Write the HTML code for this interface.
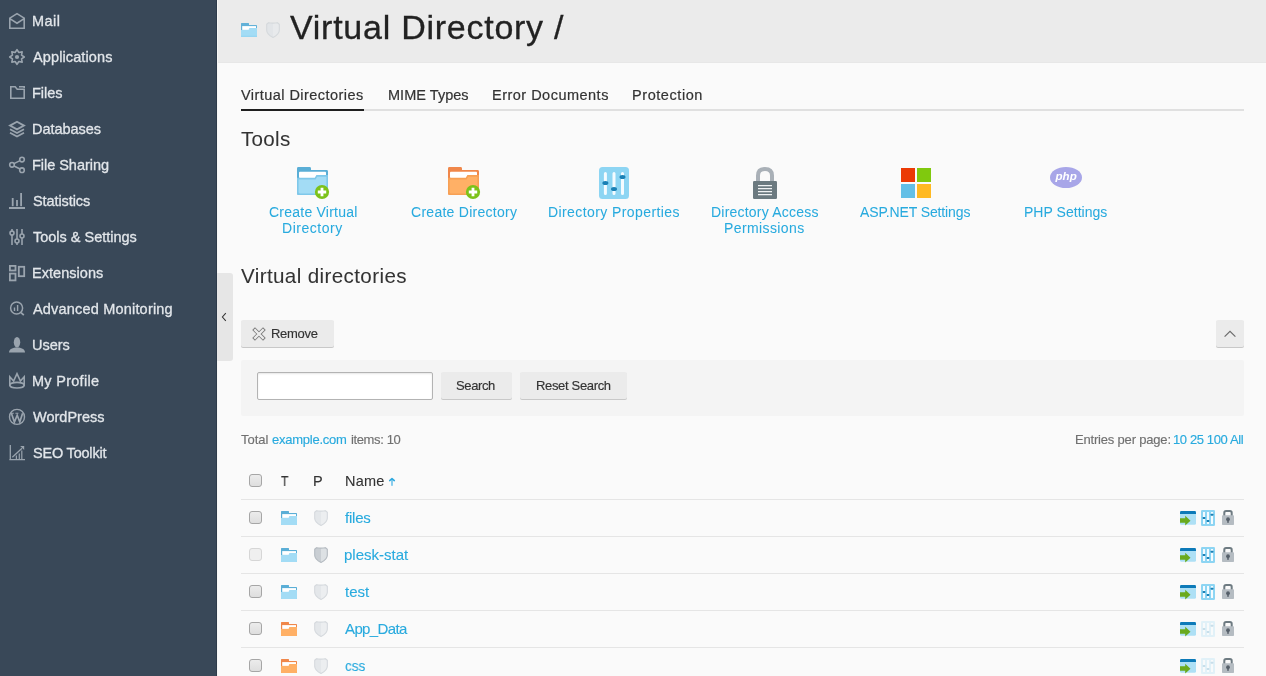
<!DOCTYPE html>
<html><head><meta charset="utf-8">
<style>
*{box-sizing:border-box}
html,body{margin:0;padding:0;width:1266px;height:676px;overflow:hidden;background:#fafafa;font-family:"Liberation Sans",sans-serif}
.t{position:absolute;white-space:nowrap;line-height:1;font-family:"Liberation Sans",sans-serif;will-change:transform;-webkit-text-stroke:0.3px currentColor}
.a{position:absolute}
svg{position:absolute;overflow:visible}
</style></head><body>
<!-- sidebar -->
<div class="a" style="left:0;top:0;width:216px;height:676px;background:#394858"></div>
<div class="a" style="left:216px;top:0;width:1px;height:676px;background:#2e3b4b"></div>
<div class="a" style="left:217px;top:0;width:1px;height:676px;background:#f6f6f4"></div>
<!-- header -->
<div class="a" style="left:218px;top:0;width:1048px;height:63px;background:#ebebeb;border-bottom:1px solid #e7e7e7"></div>
<!-- collapse handle -->
<div class="a" style="left:217px;top:273px;width:16px;height:88px;background:#e6e6e6;border-radius:0 3px 3px 0"></div>
<svg style="left:0;top:0" width="1266" height="676">
<!-- sidebar icons -->
<g fill="none" stroke="#9aa4ae" stroke-width="1.6">
 <!-- mail -->
 <path d="M9.8 28.2V18.2L17 13.6L24.2 18.2V28.2Z M9.8 18.6L17 23.2L24.2 18.6"/>
 <!-- gear -->
 <g transform="translate(17 57)"><path stroke-linejoin="round" d="M0.00 -7.30L1.88 -4.53L5.16 -5.16L4.53 -1.88L7.30 0.00L4.53 1.88L5.16 5.16L1.88 4.53L0.00 7.30L-1.88 4.53L-5.16 5.16L-4.53 1.88L-7.30 0.00L-4.53 -1.88L-5.16 -5.16L-1.88 -4.53Z"/><circle r="2.1" fill="#9aa4ae" stroke="none"/></g>
 <!-- files -->
 <path d="M10.8 86.8V98.2H24.2V89.2H17.2L15.2 86.8Z M19 86.8H24.2V88"/>
 <!-- databases -->
 <path d="M17 121.8L24 125.6L17 129.4L10 125.6Z" stroke-width="1.8"/>
 <path d="M10 129.2L17 133L24 129.2 M10 132.8L17 136.6L24 132.8" stroke-width="1.8"/>
 <!-- share -->
 <circle cx="22" cy="159.6" r="2.3"/><circle cx="12" cy="164.8" r="2.3"/><circle cx="22" cy="170.2" r="2.3"/>
 <path d="M14 163.6L20 160.6 M14 166L20 169"/>
</g>
<g fill="#9aa4ae">
 <!-- statistics -->
 <rect x="11.8" y="198" width="1.8" height="8.2"/><rect x="16.1" y="200" width="1.8" height="6.2"/><rect x="20.2" y="193" width="1.8" height="13.2"/><rect x="9" y="207" width="16" height="2"/>
</g>
<g fill="none" stroke="#9aa4ae" stroke-width="1.6">
 <!-- tools & settings -->
 <path d="M12 229V231.2 M12 235V245 M17 229V239 M17 243V245 M22 229V234 M22 238V245"/>
 <circle cx="12" cy="233.1" r="2"/><circle cx="17" cy="241" r="2"/><circle cx="22" cy="236" r="2"/>
 <!-- extensions -->
 <rect x="9.9" y="265.9" width="5.6" height="4.6" stroke-width="1.8"/><rect x="9.9" y="273.6" width="5.6" height="6.8" stroke-width="1.8"/><rect x="18.8" y="266.8" width="5.4" height="9.4" stroke-width="1.8"/>
 <!-- adv monitoring -->
 <circle cx="16.6" cy="308" r="6" stroke-width="1.5"/><path d="M21 312.6L23.8 315.2" stroke-width="1.8"/>
 <path d="M14.5 307.5V311 M17.6 305V311" stroke-width="1.4"/>
</g>
<g fill="#9aa4ae">
 <!-- users -->
 <ellipse cx="17" cy="342.2" rx="3.2" ry="5.2"/>
 <path d="M9 352.6C9 349 13 347.6 17 347.6C21 347.6 25 349 25 352.6Z"/>
</g>
<g fill="none" stroke="#9aa4ae" stroke-width="1.4">
 <!-- crown -->
 <path d="M9.8 386V376.8L13.6 381L17 373.6L20.4 381L24.2 376.8V386" stroke-width="1.6"/>
 <ellipse cx="17" cy="385.2" rx="7.2" ry="2.8" stroke-width="1.6"/>
 <!-- wordpress -->
 <circle cx="17" cy="416.9" r="7.5" stroke-width="1.4"/>
 <path d="M11.4 413.2L14.4 422L17.2 415.2L19.8 422L22.6 413.2" stroke-width="1.7"/><path d="M10.6 413.2H13.8 M15.4 413.2H18.4" stroke-width="1.1"/>
 <!-- seo -->
 <path d="M10.3 445V460.2 M9.3 459.6H25" stroke-width="1.3"/>
 <path d="M12.3 457.3L22 448.3" stroke-width="1.3"/>
 <path d="M20.2 445.9L24.2 445.9L24.2 449.9Z" fill="#9aa4ae" stroke="none"/>
 <path d="M16.4 455.6V459 M19.3 453.5V459 M21.8 450.6V459" stroke-width="1.2"/>
</g>
</svg>
<!-- title icons -->
<svg style="left:241px;top:23px" width="16" height="14" viewBox="0 0 16 14">
 <path d="M0 0.6Q0 0 0.6 0H7.4Q8 0 8 0.6V2H15.2Q16 2 16 2.8V14H0Z" fill="#62b1d8"/>
 <rect x="1.2" y="3.1" width="13.8" height="3.8" fill="#fff"/>
 <path d="M0 6.9H7.6L8.4 5.1H16V13.4Q16 14 15.4 14H0.6Q0 14 0 13.4Z" fill="#a3dcf5"/>
 <rect x="0" y="12.6" width="16" height="1.4" fill="#97d6f2"/>
</svg>
<svg style="left:266px;top:22px" width="14" height="16" viewBox="0 0 14 16">
 <path d="M0.7 2.2L2.6 0.7Q7 1.5 11.4 0.7L13.3 2.2V8.2Q13.3 12.4 7 15.4Q0.7 12.4 0.7 8.2Z" fill="#e2e5e8"/>
 <path d="M7 1.1Q9.2 1.1 11.4 0.7L13.3 2.2V8.2Q13.3 12.4 7 15.4Z" fill="#e8eaec"/>
 <path d="M0.7 2.2L2.6 0.7Q7 1.5 11.4 0.7L13.3 2.2V8.2Q13.3 12.4 7 15.4Q0.7 12.4 0.7 8.2Z" fill="none" stroke="#d5d9dc" stroke-width="1.1"/>
</svg>
<!-- tab line -->
<div class="a" style="left:241px;top:109px;width:1003px;height:2px;background:#e0e0e0"></div>
<div class="a" style="left:241px;top:109px;width:123px;height:2px;background:#1f1f1f"></div>

<!-- tool icons -->
<svg style="left:297px;top:167px" width="32" height="32" viewBox="0 0 32 32">
 <path d="M0 1.4Q0 0 1.4 0H12.6Q14 0 14 1.4V3H29.6Q31 3 31 4.4V26.6Q31 28 29.6 28H1.4Q0 28 0 26.6Z" fill="#5aaed6"/>
 <rect x="2" y="4.8" width="27" height="6.2" rx="0.8" fill="#fff"/>
 <path d="M0 10.8H17.8L19.4 8.1H31V26.6Q31 28 29.6 28H1.4Q0 28 0 26.6Z" fill="#7fc8ea"/>
 <path d="M1.6 12.4H18.6L20.2 9.7H29.4V25Q29.4 26.4 28 26.4H3Q1.6 26.4 1.6 25Z" fill="#a3dcf5"/>
 <circle cx="25" cy="25" r="7.1" fill="#7cc21a"/>
 <path d="M25 20.8V29.2 M20.8 25H29.2" stroke="#fff" stroke-width="2.8"/>
</svg>
<svg style="left:447.75px;top:167px" width="32" height="32" viewBox="0 0 32 32">
 <path d="M0 1.4Q0 0 1.4 0H12.6Q14 0 14 1.4V3H29.6Q31 3 31 4.4V26.6Q31 28 29.6 28H1.4Q0 28 0 26.6Z" fill="#f0874a"/>
 <rect x="2" y="4.8" width="27" height="6.2" rx="0.8" fill="#fff"/>
 <path d="M0 10.8H17.8L19.4 8.1H31V26.6Q31 28 29.6 28H1.4Q0 28 0 26.6Z" fill="#f7a055"/>
 <path d="M1.6 12.4H18.6L20.2 9.7H29.4V25Q29.4 26.4 28 26.4H3Q1.6 26.4 1.6 25Z" fill="#ffb066"/>
 <circle cx="25" cy="25" r="7.1" fill="#7cc21a"/>
 <path d="M25 20.8V29.2 M20.8 25H29.2" stroke="#fff" stroke-width="2.8"/>
</svg>
<svg style="left:599px;top:167px" width="30" height="32" viewBox="0 0 30 32">
 <rect x="0" y="0" width="30" height="32" rx="3.5" fill="#8dd5f3"/>
 <g stroke="#f4fbff" stroke-width="3" stroke-linecap="round"><path d="M6.4 6.4V26.6 M15 6.4V26.6 M23.5 6.4V26.6"/></g>
 <g fill="#1a80b5"><ellipse cx="6.4" cy="16" rx="3" ry="2"/><ellipse cx="15" cy="22" rx="3" ry="2"/><ellipse cx="23.5" cy="10" rx="3" ry="2"/></g>
</svg>
<svg style="left:753px;top:167px" width="24" height="32" viewBox="0 0 24 32">
 <path d="M5 14V8.6Q5 2 12 2Q19 2 19 8.6V14" fill="none" stroke="#a9b0b7" stroke-width="4"/>
 <rect x="0" y="14" width="24" height="18" rx="1.2" fill="#6c7a80"/>
 <g stroke="#f0f2f3" stroke-width="1.1"><path d="M5 18.6H19 M5 21.6H19 M5 24.6H19 M5 27.6H19"/></g>
</svg>
<svg style="left:901px;top:168px" width="30" height="30" viewBox="0 0 30 30">
 <rect x="0" y="0" width="14" height="14" fill="#eb3a05"/><rect x="16" y="0" width="14" height="14" fill="#80c90e"/>
 <rect x="0" y="16" width="14" height="14" fill="#63bfe6"/><rect x="16" y="16" width="14" height="14" fill="#ffb922"/>
</svg>
<svg style="left:1050px;top:167px;will-change:transform" width="32" height="21" viewBox="0 0 32 21">
 <ellipse cx="16" cy="10.5" rx="16" ry="10.5" fill="#a8a6e8"/>
 <text x="16.2" y="13.4" text-anchor="middle" font-family="Liberation Sans" font-weight="bold" font-style="italic" font-size="11.6" fill="#fff" letter-spacing="0.1" transform="translate(0 0)">php</text>
</svg>

<!-- remove button -->
<div class="a" style="left:241px;top:320px;width:93px;height:27px;background:#ebebeb;border-radius:2px;box-shadow:0 1px 0 #c8c8c8"></div>
<svg style="left:252px;top:327px" width="14" height="14" viewBox="0 0 14 14">
 <path d="M1.6 1.6L12.4 12.4 M12.4 1.6L1.6 12.4" stroke="#7a7a7a" stroke-width="3.9"/>
 <path d="M2.3 2.3L11.7 11.7 M11.7 2.3L2.3 11.7" stroke="#ececec" stroke-width="2.3"/>
</svg>
<!-- collapse up button -->
<div class="a" style="left:1216px;top:320px;width:28px;height:27px;background:#ebebeb;border-radius:2px;box-shadow:0 1px 0 #c8c8c8"></div>
<svg style="left:1216px;top:320px" width="28" height="28"><path d="M8.6 16.6L14 11.4L19.4 16.6" fill="none" stroke="#6b6b6b" stroke-width="1.2"/></svg>
<!-- chevron left in handle -->
<svg style="left:217px;top:273px" width="16" height="87"><path d="M8.8 40.2L5.4 44L8.8 47.8" fill="none" stroke="#333" stroke-width="1.05"/></svg>

<!-- search panel -->
<div class="a" style="left:241px;top:360px;width:1003px;height:56px;background:#f4f4f4;border-radius:2px"></div>
<div class="a" style="left:257px;top:372px;width:176px;height:28px;background:#fff;border:1px solid #b3b3b3;border-radius:2px;box-shadow:inset 0 1px 2px rgba(0,0,0,.1)"></div>
<div class="a" style="left:441px;top:372px;width:71px;height:27px;background:#ebebeb;border-radius:2px;box-shadow:0 1px 0 #c8c8c8"></div>
<div class="a" style="left:520px;top:372px;width:107px;height:27px;background:#ebebeb;border-radius:2px;box-shadow:0 1px 0 #c8c8c8"></div>

<!-- table -->
<div class="a" style="left:249px;top:474px;width:13px;height:13px;background:linear-gradient(#ececec,#dedede);border:1px solid #a6a6a6;border-radius:3px"></div>
<svg style="left:384px;top:474px" width="16" height="16" viewBox="0 0 16 16">
 <rect x="7.1" y="6" width="1.8" height="5.8" fill="#7cc8ec"/>
 <path d="M5.7 6.6L8 4.6L10.3 6.6" fill="none" stroke="#30a9df" stroke-width="1.6" stroke-linecap="round" stroke-linejoin="round"/>
</svg>
<div class="a" style="left:241px;top:499px;width:1003px;height:1px;background:#e5e5e5"></div>
<div class="a" style="left:241px;top:536px;width:1003px;height:1px;background:#e5e5e5"></div>
<div class="a" style="left:241px;top:573px;width:1003px;height:1px;background:#e5e5e5"></div>
<div class="a" style="left:241px;top:610px;width:1003px;height:1px;background:#e5e5e5"></div>
<div class="a" style="left:241px;top:647px;width:1003px;height:1px;background:#e5e5e5"></div>
<div class="a" style="left:249px;top:511px;width:13px;height:13px;background:linear-gradient(#ececec,#dedede);border:1px solid #a6a6a6;border-radius:3px"></div>
<svg style="left:281px;top:511px" width="16" height="14" viewBox="0 0 16 14">
 <path d="M0 0.6Q0 0 0.6 0H7.4Q8 0 8 0.6V2H15.2Q16 2 16 2.8V14H0Z" fill="#5aaed6"/>
 <rect x="1.2" y="3.1" width="13.8" height="3.8" fill="#fff"/>
 <path d="M0 6.9H7.6L8.4 5.1H16V13.4Q16 14 15.4 14H0.6Q0 14 0 13.4Z" fill="#a3dcf5"/>
</svg>
<svg style="left:314px;top:510px" width="14" height="16" viewBox="0 0 14 16">
 <path d="M0.7 2.2L2.6 0.7Q7 1.5 11.4 0.7L13.3 2.2V8.2Q13.3 12.4 7 15.4Q0.7 12.4 0.7 8.2Z" fill="#e4e7ea"/>
 <path d="M7 1.1Q9.2 1.1 11.4 0.7L13.3 2.2V8.2Q13.3 12.4 7 15.4Z" fill="#eceef0"/>
 <path d="M0.7 2.2L2.6 0.7Q7 1.5 11.4 0.7L13.3 2.2V8.2Q13.3 12.4 7 15.4Q0.7 12.4 0.7 8.2Z" fill="none" stroke="#d5d9dd" stroke-width="1.1"/>
</svg>
<svg style="left:1180px;top:511px" width="16" height="15" viewBox="0 0 16 15">
 <rect x="0" y="0" width="16" height="13.8" rx="1.4" fill="#aee0f5"/>
 <path d="M1.4 0H14.6Q16 0 16 1.4V3H0V1.4Q0 0 1.4 0Z" fill="#0d7ab8"/>
 <path d="M0 7.3H5.2V4.8L10.5 9.7L5.2 14.6V11.8H0Z" fill="#6aaa1e"/>
</svg>
<svg style="left:1201px;top:510px" width="14" height="16" viewBox="0 0 14 16" opacity="1">
 <rect x="0" y="0" width="14" height="16" rx="1.2" fill="#8dd5f3"/>
 <g stroke="#f4fbff" stroke-width="2"><path d="M3 2V14 M7 2V14 M11 2V14"/></g>
 <g fill="#1a80b5"><rect x="1.7" y="7" width="2.6" height="2" rx=".5"/><rect x="5.7" y="10" width="2.6" height="2" rx=".5"/><rect x="9.7" y="3.8" width="2.6" height="2" rx=".5"/></g>
</svg>
<svg style="left:1222px;top:510px" width="12" height="16" viewBox="0 0 12 16">
 <path d="M2.3 6V2.8Q2.3 1 4.1 1H7.9Q9.7 1 9.7 2.8V6" fill="none" stroke="#6e7b82" stroke-width="2"/>
 <rect x="0" y="5.2" width="12" height="9.8" rx="0.8" fill="#b5bcc2"/>
 <circle cx="6" cy="9.2" r="1.9" fill="#56606a"/><rect x="5.2" y="9.2" width="1.6" height="3.6" fill="#56606a"/>
</svg>
<div class="a" style="left:249px;top:548px;width:13px;height:13px;background:#efefef;border:1px solid #d6d6d6;border-radius:3px"></div>
<svg style="left:281px;top:548px" width="16" height="14" viewBox="0 0 16 14">
 <path d="M0 0.6Q0 0 0.6 0H7.4Q8 0 8 0.6V2H15.2Q16 2 16 2.8V14H0Z" fill="#5aaed6"/>
 <rect x="1.2" y="3.1" width="13.8" height="3.8" fill="#fff"/>
 <path d="M0 6.9H7.6L8.4 5.1H16V13.4Q16 14 15.4 14H0.6Q0 14 0 13.4Z" fill="#a3dcf5"/>
</svg>
<svg style="left:314px;top:547px" width="14" height="16" viewBox="0 0 14 16">
 <path d="M0.7 2.2L2.6 0.7Q7 1.5 11.4 0.7L13.3 2.2V8.2Q13.3 12.4 7 15.4Q0.7 12.4 0.7 8.2Z" fill="#c9ced3"/>
 <path d="M7 1.1Q9.2 1.1 11.4 0.7L13.3 2.2V8.2Q13.3 12.4 7 15.4Z" fill="#dde1e4"/>
 <path d="M0.7 2.2L2.6 0.7Q7 1.5 11.4 0.7L13.3 2.2V8.2Q13.3 12.4 7 15.4Q0.7 12.4 0.7 8.2Z" fill="none" stroke="#b5bbc1" stroke-width="1.1"/>
</svg>
<svg style="left:1180px;top:548px" width="16" height="15" viewBox="0 0 16 15">
 <rect x="0" y="0" width="16" height="13.8" rx="1.4" fill="#aee0f5"/>
 <path d="M1.4 0H14.6Q16 0 16 1.4V3H0V1.4Q0 0 1.4 0Z" fill="#0d7ab8"/>
 <path d="M0 7.3H5.2V4.8L10.5 9.7L5.2 14.6V11.8H0Z" fill="#6aaa1e"/>
</svg>
<svg style="left:1201px;top:547px" width="14" height="16" viewBox="0 0 14 16" opacity="1">
 <rect x="0" y="0" width="14" height="16" rx="1.2" fill="#8dd5f3"/>
 <g stroke="#f4fbff" stroke-width="2"><path d="M3 2V14 M7 2V14 M11 2V14"/></g>
 <g fill="#1a80b5"><rect x="1.7" y="7" width="2.6" height="2" rx=".5"/><rect x="5.7" y="10" width="2.6" height="2" rx=".5"/><rect x="9.7" y="3.8" width="2.6" height="2" rx=".5"/></g>
</svg>
<svg style="left:1222px;top:547px" width="12" height="16" viewBox="0 0 12 16">
 <path d="M2.3 6V2.8Q2.3 1 4.1 1H7.9Q9.7 1 9.7 2.8V6" fill="none" stroke="#6e7b82" stroke-width="2"/>
 <rect x="0" y="5.2" width="12" height="9.8" rx="0.8" fill="#b5bcc2"/>
 <circle cx="6" cy="9.2" r="1.9" fill="#56606a"/><rect x="5.2" y="9.2" width="1.6" height="3.6" fill="#56606a"/>
</svg>
<div class="a" style="left:249px;top:585px;width:13px;height:13px;background:linear-gradient(#ececec,#dedede);border:1px solid #a6a6a6;border-radius:3px"></div>
<svg style="left:281px;top:585px" width="16" height="14" viewBox="0 0 16 14">
 <path d="M0 0.6Q0 0 0.6 0H7.4Q8 0 8 0.6V2H15.2Q16 2 16 2.8V14H0Z" fill="#5aaed6"/>
 <rect x="1.2" y="3.1" width="13.8" height="3.8" fill="#fff"/>
 <path d="M0 6.9H7.6L8.4 5.1H16V13.4Q16 14 15.4 14H0.6Q0 14 0 13.4Z" fill="#a3dcf5"/>
</svg>
<svg style="left:314px;top:584px" width="14" height="16" viewBox="0 0 14 16">
 <path d="M0.7 2.2L2.6 0.7Q7 1.5 11.4 0.7L13.3 2.2V8.2Q13.3 12.4 7 15.4Q0.7 12.4 0.7 8.2Z" fill="#e4e7ea"/>
 <path d="M7 1.1Q9.2 1.1 11.4 0.7L13.3 2.2V8.2Q13.3 12.4 7 15.4Z" fill="#eceef0"/>
 <path d="M0.7 2.2L2.6 0.7Q7 1.5 11.4 0.7L13.3 2.2V8.2Q13.3 12.4 7 15.4Q0.7 12.4 0.7 8.2Z" fill="none" stroke="#d5d9dd" stroke-width="1.1"/>
</svg>
<svg style="left:1180px;top:585px" width="16" height="15" viewBox="0 0 16 15">
 <rect x="0" y="0" width="16" height="13.8" rx="1.4" fill="#aee0f5"/>
 <path d="M1.4 0H14.6Q16 0 16 1.4V3H0V1.4Q0 0 1.4 0Z" fill="#0d7ab8"/>
 <path d="M0 7.3H5.2V4.8L10.5 9.7L5.2 14.6V11.8H0Z" fill="#6aaa1e"/>
</svg>
<svg style="left:1201px;top:584px" width="14" height="16" viewBox="0 0 14 16" opacity="1">
 <rect x="0" y="0" width="14" height="16" rx="1.2" fill="#8dd5f3"/>
 <g stroke="#f4fbff" stroke-width="2"><path d="M3 2V14 M7 2V14 M11 2V14"/></g>
 <g fill="#1a80b5"><rect x="1.7" y="7" width="2.6" height="2" rx=".5"/><rect x="5.7" y="10" width="2.6" height="2" rx=".5"/><rect x="9.7" y="3.8" width="2.6" height="2" rx=".5"/></g>
</svg>
<svg style="left:1222px;top:584px" width="12" height="16" viewBox="0 0 12 16">
 <path d="M2.3 6V2.8Q2.3 1 4.1 1H7.9Q9.7 1 9.7 2.8V6" fill="none" stroke="#6e7b82" stroke-width="2"/>
 <rect x="0" y="5.2" width="12" height="9.8" rx="0.8" fill="#b5bcc2"/>
 <circle cx="6" cy="9.2" r="1.9" fill="#56606a"/><rect x="5.2" y="9.2" width="1.6" height="3.6" fill="#56606a"/>
</svg>
<div class="a" style="left:249px;top:622px;width:13px;height:13px;background:linear-gradient(#ececec,#dedede);border:1px solid #a6a6a6;border-radius:3px"></div>
<svg style="left:281px;top:622px" width="16" height="14" viewBox="0 0 16 14">
 <path d="M0 0.6Q0 0 0.6 0H7.4Q8 0 8 0.6V2H15.2Q16 2 16 2.8V14H0Z" fill="#f0874a"/>
 <rect x="1.2" y="3.1" width="13.8" height="3.8" fill="#fff"/>
 <path d="M0 6.9H7.6L8.4 5.1H16V13.4Q16 14 15.4 14H0.6Q0 14 0 13.4Z" fill="#ffb066"/>
</svg>
<svg style="left:314px;top:621px" width="14" height="16" viewBox="0 0 14 16">
 <path d="M0.7 2.2L2.6 0.7Q7 1.5 11.4 0.7L13.3 2.2V8.2Q13.3 12.4 7 15.4Q0.7 12.4 0.7 8.2Z" fill="#e4e7ea"/>
 <path d="M7 1.1Q9.2 1.1 11.4 0.7L13.3 2.2V8.2Q13.3 12.4 7 15.4Z" fill="#eceef0"/>
 <path d="M0.7 2.2L2.6 0.7Q7 1.5 11.4 0.7L13.3 2.2V8.2Q13.3 12.4 7 15.4Q0.7 12.4 0.7 8.2Z" fill="none" stroke="#d5d9dd" stroke-width="1.1"/>
</svg>
<svg style="left:1180px;top:622px" width="16" height="15" viewBox="0 0 16 15">
 <rect x="0" y="0" width="16" height="13.8" rx="1.4" fill="#aee0f5"/>
 <path d="M1.4 0H14.6Q16 0 16 1.4V3H0V1.4Q0 0 1.4 0Z" fill="#0d7ab8"/>
 <path d="M0 7.3H5.2V4.8L10.5 9.7L5.2 14.6V11.8H0Z" fill="#6aaa1e"/>
</svg>
<svg style="left:1201px;top:621px" width="14" height="16" viewBox="0 0 14 16" opacity="0.22">
 <rect x="0" y="0" width="14" height="16" rx="1.2" fill="#8dd5f3"/>
 <g stroke="#f4fbff" stroke-width="2"><path d="M3 2V14 M7 2V14 M11 2V14"/></g>
 <g fill="#1a80b5"><rect x="1.7" y="7" width="2.6" height="2" rx=".5"/><rect x="5.7" y="10" width="2.6" height="2" rx=".5"/><rect x="9.7" y="3.8" width="2.6" height="2" rx=".5"/></g>
</svg>
<svg style="left:1222px;top:621px" width="12" height="16" viewBox="0 0 12 16">
 <path d="M2.3 6V2.8Q2.3 1 4.1 1H7.9Q9.7 1 9.7 2.8V6" fill="none" stroke="#6e7b82" stroke-width="2"/>
 <rect x="0" y="5.2" width="12" height="9.8" rx="0.8" fill="#b5bcc2"/>
 <circle cx="6" cy="9.2" r="1.9" fill="#56606a"/><rect x="5.2" y="9.2" width="1.6" height="3.6" fill="#56606a"/>
</svg>
<div class="a" style="left:249px;top:659px;width:13px;height:13px;background:linear-gradient(#ececec,#dedede);border:1px solid #a6a6a6;border-radius:3px"></div>
<svg style="left:281px;top:659px" width="16" height="14" viewBox="0 0 16 14">
 <path d="M0 0.6Q0 0 0.6 0H7.4Q8 0 8 0.6V2H15.2Q16 2 16 2.8V14H0Z" fill="#f0874a"/>
 <rect x="1.2" y="3.1" width="13.8" height="3.8" fill="#fff"/>
 <path d="M0 6.9H7.6L8.4 5.1H16V13.4Q16 14 15.4 14H0.6Q0 14 0 13.4Z" fill="#ffb066"/>
</svg>
<svg style="left:314px;top:658px" width="14" height="16" viewBox="0 0 14 16">
 <path d="M0.7 2.2L2.6 0.7Q7 1.5 11.4 0.7L13.3 2.2V8.2Q13.3 12.4 7 15.4Q0.7 12.4 0.7 8.2Z" fill="#e4e7ea"/>
 <path d="M7 1.1Q9.2 1.1 11.4 0.7L13.3 2.2V8.2Q13.3 12.4 7 15.4Z" fill="#eceef0"/>
 <path d="M0.7 2.2L2.6 0.7Q7 1.5 11.4 0.7L13.3 2.2V8.2Q13.3 12.4 7 15.4Q0.7 12.4 0.7 8.2Z" fill="none" stroke="#d5d9dd" stroke-width="1.1"/>
</svg>
<svg style="left:1180px;top:659px" width="16" height="15" viewBox="0 0 16 15">
 <rect x="0" y="0" width="16" height="13.8" rx="1.4" fill="#aee0f5"/>
 <path d="M1.4 0H14.6Q16 0 16 1.4V3H0V1.4Q0 0 1.4 0Z" fill="#0d7ab8"/>
 <path d="M0 7.3H5.2V4.8L10.5 9.7L5.2 14.6V11.8H0Z" fill="#6aaa1e"/>
</svg>
<svg style="left:1201px;top:658px" width="14" height="16" viewBox="0 0 14 16" opacity="0.22">
 <rect x="0" y="0" width="14" height="16" rx="1.2" fill="#8dd5f3"/>
 <g stroke="#f4fbff" stroke-width="2"><path d="M3 2V14 M7 2V14 M11 2V14"/></g>
 <g fill="#1a80b5"><rect x="1.7" y="7" width="2.6" height="2" rx=".5"/><rect x="5.7" y="10" width="2.6" height="2" rx=".5"/><rect x="9.7" y="3.8" width="2.6" height="2" rx=".5"/></g>
</svg>
<svg style="left:1222px;top:658px" width="12" height="16" viewBox="0 0 12 16">
 <path d="M2.3 6V2.8Q2.3 1 4.1 1H7.9Q9.7 1 9.7 2.8V6" fill="none" stroke="#6e7b82" stroke-width="2"/>
 <rect x="0" y="5.2" width="12" height="9.8" rx="0.8" fill="#b5bcc2"/>
 <circle cx="6" cy="9.2" r="1.9" fill="#56606a"/><rect x="5.2" y="9.2" width="1.6" height="3.6" fill="#56606a"/>
</svg>
<div class="t" style="left:32.20px;top:14.00px;font-size:14.5px;color:#e2e6ea;letter-spacing:0.467px;-webkit-text-stroke:0.3px currentColor">Mail</div>
<div class="t" style="left:33.20px;top:50.00px;font-size:14.5px;color:#e2e6ea;letter-spacing:0.109px;-webkit-text-stroke:0.3px currentColor">Applications</div>
<div class="t" style="left:32.20px;top:86.00px;font-size:14.5px;color:#e2e6ea;letter-spacing:-0.050px;-webkit-text-stroke:0.3px currentColor">Files</div>
<div class="t" style="left:32.20px;top:122.00px;font-size:14.5px;color:#e2e6ea;letter-spacing:-0.025px;-webkit-text-stroke:0.3px currentColor">Databases</div>
<div class="t" style="left:32.20px;top:158.00px;font-size:14.5px;color:#e2e6ea;letter-spacing:-0.036px;-webkit-text-stroke:0.3px currentColor">File Sharing</div>
<div class="t" style="left:33.20px;top:194.00px;font-size:14.5px;color:#e2e6ea;letter-spacing:-0.089px;-webkit-text-stroke:0.3px currentColor">Statistics</div>
<div class="t" style="left:33.20px;top:230.00px;font-size:14.5px;color:#e2e6ea;letter-spacing:-0.013px;-webkit-text-stroke:0.3px currentColor">Tools &amp; Settings</div>
<div class="t" style="left:32.20px;top:266.00px;font-size:14.5px;color:#e2e6ea;letter-spacing:0.044px;-webkit-text-stroke:0.3px currentColor">Extensions</div>
<div class="t" style="left:33.20px;top:302.00px;font-size:14.5px;color:#e2e6ea;letter-spacing:0.189px;-webkit-text-stroke:0.3px currentColor">Advanced Monitoring</div>
<div class="t" style="left:32.20px;top:338.00px;font-size:14.5px;color:#e2e6ea;letter-spacing:0.000px;-webkit-text-stroke:0.3px currentColor">Users</div>
<div class="t" style="left:32.20px;top:374.00px;font-size:14.5px;color:#e2e6ea;letter-spacing:0.278px;-webkit-text-stroke:0.3px currentColor">My Profile</div>
<div class="t" style="left:33.20px;top:410.00px;font-size:14.5px;color:#e2e6ea;letter-spacing:0.000px;-webkit-text-stroke:0.3px currentColor">WordPress</div>
<div class="t" style="left:33.20px;top:446.00px;font-size:14.5px;color:#e2e6ea;letter-spacing:-0.200px;-webkit-text-stroke:0.3px currentColor">SEO Toolkit</div>
<div class="t" style="left:290.00px;top:10.00px;font-size:34px;color:#222222;letter-spacing:0.744px;-webkit-text-stroke:0.3px currentColor">Virtual Directory /</div>
<div class="t" style="left:241.10px;top:88.00px;font-size:14.5px;color:#333333;letter-spacing:0.444px;-webkit-text-stroke:0.2px currentColor">Virtual Directories</div>
<div class="t" style="left:387.60px;top:88.00px;font-size:14.5px;color:#333333;letter-spacing:0.033px;-webkit-text-stroke:0.2px currentColor">MIME Types</div>
<div class="t" style="left:491.90px;top:88.00px;font-size:14.5px;color:#333333;letter-spacing:0.486px;-webkit-text-stroke:0.2px currentColor">Error Documents</div>
<div class="t" style="left:631.70px;top:88.00px;font-size:14.5px;color:#333333;letter-spacing:0.567px;-webkit-text-stroke:0.2px currentColor">Protection</div>
<div class="t" style="left:241.10px;top:129.00px;font-size:20.6px;color:#333333;letter-spacing:0.300px;-webkit-text-stroke:0.05px currentColor">Tools</div>
<div class="t" style="left:269.00px;top:205.00px;font-size:14px;color:#28aade;letter-spacing:0.231px;-webkit-text-stroke:0.05px currentColor">Create Virtual</div>
<div class="t" style="left:282.40px;top:221.00px;font-size:14px;color:#28aade;letter-spacing:0.525px;-webkit-text-stroke:0.05px currentColor">Directory</div>
<div class="t" style="left:410.70px;top:205.00px;font-size:14px;color:#28aade;letter-spacing:0.273px;-webkit-text-stroke:0.05px currentColor">Create Directory</div>
<div class="t" style="left:547.80px;top:205.00px;font-size:14px;color:#28aade;letter-spacing:0.411px;-webkit-text-stroke:0.05px currentColor">Directory Properties</div>
<div class="t" style="left:710.60px;top:205.00px;font-size:14px;color:#28aade;letter-spacing:0.213px;-webkit-text-stroke:0.05px currentColor">Directory Access</div>
<div class="t" style="left:724.20px;top:221.00px;font-size:14px;color:#28aade;letter-spacing:0.400px;-webkit-text-stroke:0.05px currentColor">Permissions</div>
<div class="t" style="left:860.30px;top:205.00px;font-size:14px;color:#28aade;letter-spacing:-0.127px;-webkit-text-stroke:0.05px currentColor">ASP.NET Settings</div>
<div class="t" style="left:1024.10px;top:205.00px;font-size:14px;color:#28aade;letter-spacing:0.027px;-webkit-text-stroke:0.05px currentColor">PHP Settings</div>
<div class="t" style="left:241.00px;top:266.00px;font-size:20.6px;color:#333333;letter-spacing:0.378px;-webkit-text-stroke:0.05px currentColor">Virtual directories</div>
<div class="t" style="left:270.70px;top:327.00px;font-size:13px;color:#333333;letter-spacing:-0.280px;-webkit-text-stroke:0.15px currentColor">Remove</div>
<div class="t" style="left:456.40px;top:379.00px;font-size:13px;color:#333333;letter-spacing:-0.380px;-webkit-text-stroke:0.15px currentColor">Search</div>
<div class="t" style="left:536.00px;top:379.00px;font-size:13px;color:#333333;letter-spacing:-0.336px;-webkit-text-stroke:0.15px currentColor">Reset Search</div>
<div class="t" style="left:241.10px;top:433.00px;font-size:13px;color:#707070;letter-spacing:0.000px;-webkit-text-stroke:0.15px currentColor">Total</div>
<div class="t" style="left:272.10px;top:433.00px;font-size:13px;color:#28aade;letter-spacing:-0.240px;-webkit-text-stroke:0.15px currentColor">example.com</div>
<div class="t" style="left:351.00px;top:433.00px;font-size:13px;color:#707070;letter-spacing:-0.375px;-webkit-text-stroke:0.15px currentColor">items: 10</div>
<div class="t" style="left:1074.70px;top:433.00px;font-size:13px;color:#707070;letter-spacing:-0.188px;-webkit-text-stroke:0.15px currentColor">Entries per page:</div>
<div class="t" style="left:1172.90px;top:433.00px;font-size:13px;color:#28aade;letter-spacing:-0.383px;-webkit-text-stroke:0.15px currentColor">10 25 100 All</div>
<div class="t" style="left:281.10px;top:474.00px;font-size:14.5px;color:#333333;letter-spacing:0.000px;-webkit-text-stroke:0.1px currentColor;transform:scaleX(0.8444);transform-origin:0 0">T</div>
<div class="t" style="left:312.70px;top:474.00px;font-size:14.5px;color:#333333;letter-spacing:-0.700px;-webkit-text-stroke:0.1px currentColor">P</div>
<div class="t" style="left:344.50px;top:474.00px;font-size:14.5px;color:#333333;letter-spacing:0.233px;-webkit-text-stroke:0.1px currentColor">Name</div>
<div class="t" style="left:345.00px;top:510.00px;font-size:15px;color:#28aade;letter-spacing:-0.225px;-webkit-text-stroke:0.12px currentColor">files</div>
<div class="t" style="left:344.00px;top:547.00px;font-size:15px;color:#28aade;letter-spacing:0.000px;-webkit-text-stroke:0.12px currentColor">plesk-stat</div>
<div class="t" style="left:345.00px;top:584.00px;font-size:15px;color:#28aade;letter-spacing:0.000px;-webkit-text-stroke:0.12px currentColor">test</div>
<div class="t" style="left:345.00px;top:621.00px;font-size:15px;color:#28aade;letter-spacing:-0.629px;-webkit-text-stroke:0.12px currentColor">App_Data</div>
<div class="t" style="left:345.00px;top:658.00px;font-size:15px;color:#28aade;letter-spacing:0.000px;-webkit-text-stroke:0.12px currentColor;transform:scaleX(0.9000);transform-origin:0 0">css</div>
</body></html>
